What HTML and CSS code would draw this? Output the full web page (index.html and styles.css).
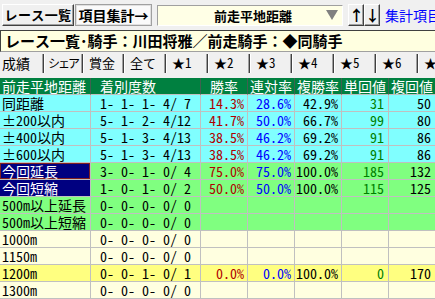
FILE: index.html
```html
<!DOCTYPE html>
<html>
  <head>
    <title>レース一覧</title>
    <link rel="stylesheet" href="styles.css">
  </head>
  <body>
    <div class="toolbar">
      <button class="btn btn-list">レース一覧</button>
      <button class="btn btn-hot">項目集計→</button>
      <div class="combo">
        <span class="combo-text">前走平地距離</span>
        <span class="combo-arrow"></span>
      </div>
      <div class="arrows">
        <button class="btn btn-arrow">↑</button>
        <button class="btn btn-arrow">↓</button>
      </div>
      <a class="link" href="#">集計項目...</a>
    </div>

    <div class="title">レース一覧･騎手：川田将雅／前走騎手：◆同騎手</div>

    <div class="tabs">
      <div class="tab active">成績</div>
      <div class="tab tab-share">シェア</div>
      <div class="tab tab-prize">賞金</div>
      <div class="tab">全て</div>
      <div class="tab">★1</div>
      <div class="tab">★2</div>
      <div class="tab">★3</div>
      <div class="tab">★4</div>
      <div class="tab">★5</div>
      <div class="tab">★6</div>
      <div class="tab">★7</div>
    </div>

    <table class="grid">
      <colgroup>
        <col class="c-name">
        <col class="c-count">
        <col class="c-num">
        <col class="c-num">
        <col class="c-num">
        <col class="c-num">
        <col class="c-num">
      </colgroup>
      <thead>
        <tr>
          <th class="h-left">前走平地距離</th>
          <th class="h-count">着別度数</th>
          <th>勝率</th>
          <th>連対率</th>
          <th>複勝率</th>
          <th>単回値</th>
          <th>複回値</th>
        </tr>
      </thead>
      <tbody>
        <tr class="cyan">
          <td class="name">同距離</td>
          <td class="count">1- 1- 1- 4/ 7</td>
          <td class="win">14.3%</td>
          <td class="ren">28.6%</td>
          <td class="fuku">42.9%</td>
          <td class="tan">31</td>
          <td class="val">50</td>
        </tr>
        <tr class="cyan">
          <td class="name">±200以内</td>
          <td class="count">5- 1- 2- 4/12</td>
          <td class="win">41.7%</td>
          <td class="ren">50.0%</td>
          <td class="fuku">66.7%</td>
          <td class="tan">99</td>
          <td class="val">80</td>
        </tr>
        <tr class="cyan">
          <td class="name">±400以内</td>
          <td class="count">5- 1- 3- 4/13</td>
          <td class="win">38.5%</td>
          <td class="ren">46.2%</td>
          <td class="fuku">69.2%</td>
          <td class="tan">91</td>
          <td class="val">86</td>
        </tr>
        <tr class="cyan">
          <td class="name">±600以内</td>
          <td class="count">5- 1- 3- 4/13</td>
          <td class="win">38.5%</td>
          <td class="ren">46.2%</td>
          <td class="fuku">69.2%</td>
          <td class="tan">91</td>
          <td class="val">86</td>
        </tr>
        <tr class="green">
          <td class="name navy focus">今回延長</td>
          <td class="count">3- 0- 1- 0/ 4</td>
          <td class="win">75.0%</td>
          <td class="ren">75.0%</td>
          <td class="fuku">100.0%</td>
          <td class="tan">185</td>
          <td class="val">132</td>
        </tr>
        <tr class="green">
          <td class="name navy">今回短縮</td>
          <td class="count">1- 0- 1- 0/ 2</td>
          <td class="win">50.0%</td>
          <td class="ren">50.0%</td>
          <td class="fuku">100.0%</td>
          <td class="tan">115</td>
          <td class="val">125</td>
        </tr>
        <tr class="green">
          <td class="name">500m以上延長</td>
          <td class="count">0- 0- 0- 0/ 0</td>
          <td></td><td></td><td></td><td></td><td></td>
        </tr>
        <tr class="green">
          <td class="name">500m以上短縮</td>
          <td class="count">0- 0- 0- 0/ 0</td>
          <td></td><td></td><td></td><td></td><td></td>
        </tr>
        <tr class="cream">
          <td class="name">1000m</td>
          <td class="count">0- 0- 0- 0/ 0</td>
          <td></td><td></td><td></td><td></td><td></td>
        </tr>
        <tr class="cream">
          <td class="name">1150m</td>
          <td class="count">0- 0- 0- 0/ 0</td>
          <td></td><td></td><td></td><td></td><td></td>
        </tr>
        <tr class="yellow">
          <td class="name">1200m</td>
          <td class="count">0- 0- 1- 0/ 1</td>
          <td class="win">0.0%</td>
          <td class="ren">0.0%</td>
          <td class="fuku">100.0%</td>
          <td class="tan">0</td>
          <td class="val">170</td>
        </tr>
        <tr class="cream">
          <td class="name">1300m</td>
          <td class="count">0- 0- 0- 0/ 0</td>
          <td></td><td></td><td></td><td></td><td></td>
        </tr>
      </tbody>
    </table>
  </body>
</html>
```

FILE: styles.css
```css
body {
  margin: 0;
  width: 435px;
  height: 299px;
  overflow: hidden;
  background-color: #f0f0f0;
  font-family: "Noto Sans Mono CJK JP", "Noto Sans CJK JP", sans-serif;
  font-size: 14px;
  color: #000000;
}

/* top toolbar */
.toolbar {
  height: 30px;
  display: flex;
  align-items: center;
  padding-left: 2px;
  white-space: nowrap;
}

.btn {
  flex: none;
  font-family: inherit;
  font-size: 14px;
  font-weight: bold;
  height: 22px;
  padding: 0;
  margin: 0;
  line-height: 18px;
  background-color: #f0f0f0;
  color: #000000;
  border: 1px solid;
  border-color: #ffffff #404040 #404040 #ffffff;
  box-shadow: inset -1px -1px 0 #a0a0a0;
}

.btn-list {
  width: 72px;
  font-size: 13px;
  letter-spacing: 0.4px;
}

.btn-hot {
  margin-left: 1px;
  width: 77px;
  background-color: #fafafa;
  border-color: #a0a0a0;
  box-shadow: inset 0 0 0 1px #e0e0e0;
}

.combo {
  flex: none;
  margin-left: 5px;
  width: 186px;
  height: 21px;
  box-sizing: border-box;
  display: flex;
  align-items: center;
  background-color: #ffffe6;
  border: 1px solid;
  border-color: #a0a0a0 #ffffff #ffffff #a0a0a0;
}

.combo-text {
  flex: 1;
  text-align: center;
  font-size: 13px;
  font-weight: bold;
  padding-left: 22px;
}

.combo-arrow {
  width: 0;
  height: 0;
  margin-right: 4px;
  border-left: 6px solid transparent;
  border-right: 6px solid transparent;
  border-top: 10px solid #808080;
}

.arrows {
  flex: none;
  display: flex;
  margin-left: 5px;
}

.btn-arrow {
  width: 16px;
  font-size: 15px;
}

.link {
  margin-left: 5px;
  color: #0000ff;
  text-decoration: none;
  font-size: 14px;
}

/* title line */
.title {
  height: 20px;
  padding-left: 4px;
  line-height: 20px;
  font-size: 15px;
  font-weight: bold;
  white-space: nowrap;
  background-color: #ffffe0;
  border-top: 1px solid #404040;
  border-left: 1px solid #404040;
  border-bottom: 1px solid #a0a0a0;
}

/* tab strip */
.tabs {
  display: flex;
  height: 19px;
  margin-top: 2px;
  margin-bottom: 5px;
  white-space: nowrap;
  overflow: hidden;
}

.tab {
  width: 42px;
  flex: none;
  box-sizing: border-box;
  padding-left: 5px;
  line-height: 18px;
  font-size: 13px;
  border-right: 1px solid #404040;
  border-left: 1px solid #ffffff;
  box-shadow: inset -1px 0 0 #a0a0a0;
}

.tab.active {
  width: 44px;
  padding-left: 2px;
  border-left: none;
  font-size: 14px;
}

.tab.tab-share {
  width: 39px;
  padding-left: 3px;
  font-size: 12px;
  letter-spacing: -2px;
}

.tab.tab-prize {
  width: 41px;
}

/* data grid */
.grid {
  border-collapse: separate;
  border-spacing: 0;
  table-layout: fixed;
  width: 436px;
}

.c-name {
  width: 91px;
}

.c-count {
  width: 110px;
}

.c-num {
  width: 47px;
}

.grid th,
.grid td {
  height: 16px;
  padding: 0;
  line-height: 16px;
  font-size: 14px;
  font-weight: normal;
  white-space: nowrap;
  overflow: hidden;
  border-right: 1px solid #c0c0c0;
  border-bottom: 1px solid #c0c0c0;
}

.grid th {
  background-color: #008040;
  color: #ffffff;
  text-align: center;
  border-right-color: #406050;
  border-bottom-color: #c0c0c0;
}

.grid th.h-left {
  text-align: left;
  padding-left: 2px;
}

.grid th.h-count {
  text-align: left;
  padding-left: 9px;
}

.grid td {
  text-align: right;
  padding-right: 3px;
}

.grid td.name {
  text-align: left;
  padding-left: 2px;
  padding-right: 0;
}

.grid td.count {
  text-align: left;
  padding-left: 9px;
}

.grid td.tan,
.grid td.val {
  padding-right: 4px;
}

.cyan td {
  background-color: #80ffff;
}

.green td {
  background-color: #80ff80;
}

.cream td {
  background-color: #ffffe0;
}

.yellow td {
  background-color: #ffff80;
}

.grid td.navy {
  background-color: #000080;
  color: #ffffff;
}

.grid td.focus {
  box-shadow: inset 0 0 0 1px #802020;
}

.win {
  color: #b00000;
}

.ren {
  color: #0000ff;
}

.fuku {
  color: #000000;
}

.tan {
  color: #008000;
}
```
